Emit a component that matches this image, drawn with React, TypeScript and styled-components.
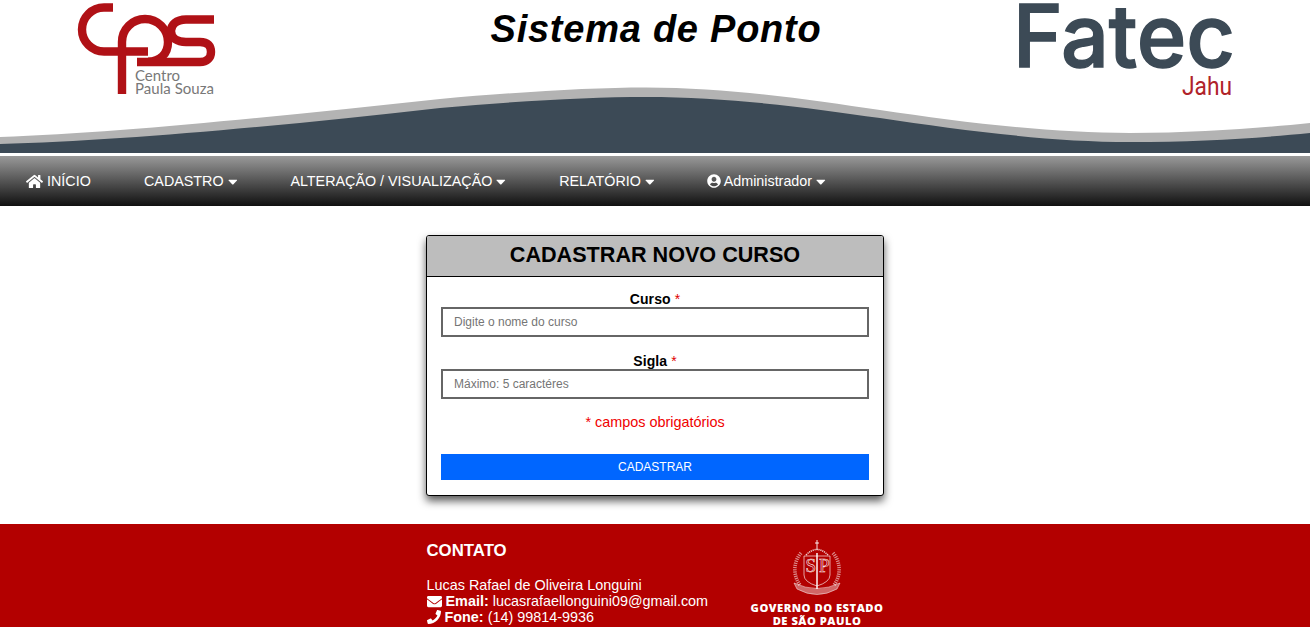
import styled, { createGlobalStyle } from "styled-components";
import { FaCaretDown, FaEnvelope, FaHome, FaPhone, FaUserCircle } from "react-icons/fa";

const GlobalStyle = createGlobalStyle`
  html, body {
    margin: 0;
    height: 627px;
    overflow: hidden;
    background: #fff;
    font-family: "Liberation Sans", Arial, sans-serif;
  }
`

const Header = styled.header`
  position: relative;
  height: 153px;
  padding: 3px 77px 0;
  box-sizing: border-box;
  display: flex;
  justify-content: space-between;
  align-items: flex-start;
  overflow: hidden;
`

const Wave = styled.svg`
  position: absolute;
  left: 0;
  top: 0;
  width: 1310px;
  height: 153px;
`

const LogoArt = styled.svg`
  position: relative;
  overflow: visible;
`

const Title = styled.h1`
  position: relative;
  margin: 4px 0 0 80px;
  font-size: 38px;
  line-height: 44px;
  font-weight: 700;
  font-style: italic;
  color: #000;
  letter-spacing: 0.75px;
`

const Nav = styled.nav`
  margin-top: 3px;
  height: 50px;
  display: flex;
  align-items: center;
  background: linear-gradient(to bottom, #999999, #101010);
`

const NavItem = styled.a`
  padding: 0 27.2px 0 26px;
  display: flex;
  align-items: center;
  gap: 4px;
  color: #fff;
  font-size: 14.33px;
  line-height: 50px;
  white-space: nowrap;

  svg {
    flex: none;
  }
`

const Caret = styled(FaCaretDown)`
  width: 9.6px;
  height: 15px;
`

const UserIcon = styled(FaUserCircle)`
  margin: 0 -1px 0 -1px;
`

const Main = styled.main`
  padding-top: 29px;
  height: 318px;
  box-sizing: border-box;
`

const Card = styled.section`
  width: 458px;
  height: 261px;
  margin: 0 auto;
  box-sizing: border-box;
  border: 1px solid #000;
  border-radius: 3px;
  background: #fff;
  box-shadow: 0 5px 9px rgba(0, 0, 0, 0.65);
`

const CardTitle = styled.h2`
  margin: 0;
  height: 41px;
  box-sizing: border-box;
  border-bottom: 1px solid #000;
  border-radius: 2px 2px 0 0;
  background: #bdbdbd;
  color: #000;
  font-size: 21.6px;
  line-height: 38px;
  font-weight: 700;
  text-align: center;
`

const Form = styled.form`
  padding: 14px 14px 0;
  display: flex;
  flex-direction: column;
`

const Field = styled.div`
  display: flex;
  flex-direction: column;
  margin-bottom: 16.5px;

  & + & {
    margin-bottom: 15.5px;
  }
`

const Label = styled.label`
  color: #000;
  font-size: 14px;
  line-height: 16px;
  font-weight: 700;
  text-align: center;
  letter-spacing: 0.1px;

  span {
    color: #e00000;
    font-weight: 400;
  }
`

const Input = styled.input`
  height: 29.5px;
  margin: 0;
  padding: 0 11px;
  box-sizing: border-box;
  border: 2px solid #666;
  outline: none;
  background: #fff;
  font-family: "Liberation Sans", Arial, sans-serif;
  font-size: 12px;

  &::placeholder {
    color: #757575;
    opacity: 1;
  }
`

const Required = styled.p`
  margin: 0 0 23px;
  color: #f00000;
  font-size: 14.4px;
  line-height: 17px;
  text-align: center;
`

const Submit = styled.button`
  height: 26px;
  padding: 0;
  border: none;
  background: #0066ff;
  color: #fff;
  font-family: "Liberation Sans", Arial, sans-serif;
  font-size: 12px;
`

const Footer = styled.footer`
  height: 103px;
  overflow: hidden;
  background: #b30000;
  color: #fff;
`

const FooterRow = styled.div`
  width: 458px;
  margin: 0 auto;
  display: flex;
  justify-content: space-between;
`

const Contact = styled.div`
  padding: 18px 0 0 0.5px;
  font-size: 14.4px;
  line-height: 16px;
`

const ContactTitle = styled.h3`
  margin: 0 0 17px;
  font-size: 16.8px;
  line-height: 18px;
  font-weight: 700;
`

const ContactLine = styled.div`
  display: flex;
  align-items: center;
  gap: 4px;
  white-space: nowrap;

  b {
    font-weight: 700;
  }

  svg {
    flex: none;
  }
`

const Gov = styled.div`
  width: 134px;
  padding-top: 15px;
  display: flex;
  flex-direction: column;
  align-items: center;
`

const GovName = styled.div`
  margin-top: 1px;
  font-family: "Open Sans", sans-serif;
  font-size: 11.2px;
  line-height: 12.5px;
  font-weight: 800;
  letter-spacing: 0.5px;
  text-align: center;
  white-space: nowrap;
`

function WaveArt() {
  return (
    <Wave viewBox="0 0 1310 153" aria-hidden="true">
      <path
        fill="#b3b3b3"
        d="M0 137C120 133 280 116 440 99C520 92 590 87.5 646 87.5C730 87.5 810 100 880 110C960 122 1050 133 1130 133C1200 133 1260 128 1310 123V153H0Z"
      />
      <path
        fill="#3c4a56"
        d="M0 144C120 141 280 126 440 108C520 101 590 97 646 97C730 97 810 108 880 118C960 130 1050 142 1130 142C1200 142 1260 138 1310 133V153H0Z"
      />
    </Wave>
  )
}

function CpsLogo() {
  return (
    <LogoArt width="140" height="94" viewBox="77 3 140 94">
      <g fill="none" stroke="#b01116" strokeWidth="8.4">
        <path d="M113 7.5H104A21.7 21.7 0 0 0 104 51.5H148" />
        <path d="M122 94V42A23 23 0 0 1 168 42C168 54 160 61.7 148 61.7" />
        <path d="M214 19.5H186C176 19.5 171 25 171 31C171 38 177 42 186 42H200C208 42 211 46 211 52C211 58 207 62 200 62H137" />
      </g>
      <g fill="#787878" fontFamily="Lato, sans-serif" fontSize="15" fontWeight="400">
        <text x="135" y="81">Centro</text>
        <text x="135" y="93.5" textLength="79">Paula Souza</text>
      </g>
    </LogoArt>
  )
}

function FatecLogo() {
  return (
    <LogoArt width="218" height="94" viewBox="1016 3 218 94">
      <text
        x="1014"
        y="66.5"
        fill="#3c4a56"
        stroke="#3c4a56"
        strokeWidth="1.5"
        fontFamily="Inter, sans-serif"
        fontSize="86"
        fontWeight="500"
        textLength="222"
        lengthAdjust="spacingAndGlyphs"
      >
        Fatec
      </text>
      <text
        x="1183"
        y="95"
        fill="#b0232a"
        fontFamily="Roboto, sans-serif"
        fontSize="26"
        textLength="50"
        lengthAdjust="spacingAndGlyphs"
      >
        Jahu
      </text>
    </LogoArt>
  )
}

function Crest() {
  return (
    <svg width="50" height="62" viewBox="0 0 50 62" fill="none" stroke="#fff" strokeWidth="0.6">
      <path d="M25 1V11M23 4H27" strokeWidth="0.9" />
      <path d="M14 16Q25 5 36 16" strokeOpacity="0.8" strokeWidth="1.6" strokeDasharray="1.2 0.8" />
      <path d="M9 14C1 23 1 37 8 46" strokeWidth="3.6" strokeDasharray="1.2 1" strokeOpacity="0.55" />
      <path d="M41 14C49 23 49 37 42 46" strokeWidth="3.6" strokeDasharray="1.2 1" strokeOpacity="0.55" />
      <path d="M12 17H38V36Q38 43 25 47Q12 43 12 36Z" strokeWidth="0.7" strokeOpacity="0.9" />
      <text x="13.5" y="33" fontFamily="Liberation Serif, serif" fontSize="19" strokeOpacity="0.9">S</text>
      <text x="27" y="33" fontFamily="Liberation Serif, serif" fontSize="19" strokeOpacity="0.9">P</text>
      <path d="M25 14V50" strokeWidth="1.6" strokeOpacity="0.9" />
      <path d="M2 44Q25 55 48 44L45 50Q25 61 5 50Z" fill="#fff" fillOpacity="0.4" strokeOpacity="0.8" />
    </svg>
  )
}

export default function App() {
  return (
    <>
      <GlobalStyle />
      <Header>
        <WaveArt />
        <CpsLogo />
        <Title>Sistema de Ponto</Title>
        <FatecLogo />
      </Header>
      <Nav>
        <NavItem><FaHome size={17} />INÍCIO</NavItem>
        <NavItem>CADASTRO<Caret /></NavItem>
        <NavItem>ALTERAÇÃO / VISUALIZAÇÃO<Caret /></NavItem>
        <NavItem>RELATÓRIO<Caret /></NavItem>
        <NavItem><UserIcon size={14} />Administrador<Caret /></NavItem>
      </Nav>
      <Main>
        <Card>
          <CardTitle>CADASTRAR NOVO CURSO</CardTitle>
          <Form>
            <Field>
              <Label>Curso <span>*</span></Label>
              <Input placeholder="Digite o nome do curso" />
            </Field>
            <Field>
              <Label>Sigla <span>*</span></Label>
              <Input placeholder="Máximo: 5 caractéres" />
            </Field>
            <Required>* campos obrigatórios</Required>
            <Submit type="button">CADASTRAR</Submit>
          </Form>
        </Card>
      </Main>
      <Footer>
        <FooterRow>
          <Contact>
            <ContactTitle>CONTATO</ContactTitle>
            <ContactLine>Lucas Rafael de Oliveira Longuini</ContactLine>
            <ContactLine><FaEnvelope size={15} /><b>Email:</b> lucasrafaellonguini09@gmail.com</ContactLine>
            <ContactLine><FaPhone size={14} /><b>Fone:</b> (14) 99814-9936</ContactLine>
          </Contact>
          <Gov>
            <Crest />
            <GovName>GOVERNO DO ESTADO<br />DE SÃO PAULO</GovName>
          </Gov>
        </FooterRow>
      </Footer>
    </>
  )
}
